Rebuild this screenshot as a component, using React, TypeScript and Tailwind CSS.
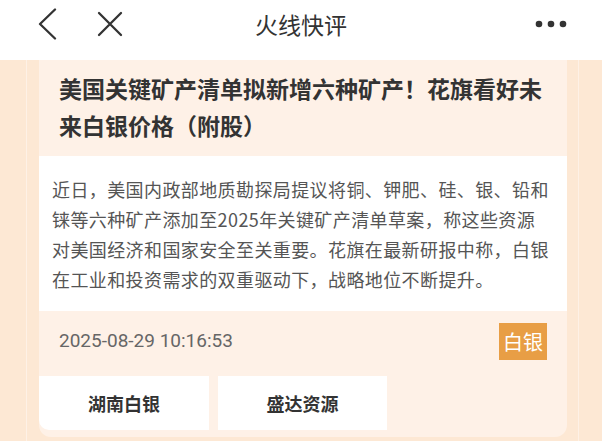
const cjk = "font-['Noto_Sans_CJK_SC','Noto_Sans',sans-serif]";

function BackIcon() {
  return (
    <svg width="20" height="32" viewBox="0 0 20 32" fill="none">
      <path d="M18 1.5 L3 16 L18 30.5" stroke="#333333" strokeWidth="2.3" strokeLinecap="round" strokeLinejoin="round" />
    </svg>
  );
}

function CloseIcon() {
  return (
    <svg width="26" height="26" viewBox="0 0 26 26" fill="none">
      <path d="M2 2 L24 24 M24 2 L2 24" stroke="#333333" strokeWidth="2.3" strokeLinecap="round" />
    </svg>
  );
}

function MoreIcon() {
  return (
    <svg width="34" height="10" viewBox="0 0 34 10" fill="#333333">
      <circle cx="5" cy="5" r="3.3" />
      <circle cx="17" cy="5" r="3.3" />
      <circle cx="29" cy="5" r="3.3" />
    </svg>
  );
}

function Header() {
  return (
    <div className="h-[60px] bg-white flex items-center justify-between pl-[37px] pr-[34px] relative shrink-0">
      <div className="flex items-center gap-[40px] pb-[12px]">
        <BackIcon />
        <CloseIcon />
      </div>
      <p className={`absolute left-1/2 -translate-x-1/2 top-[10px] text-[23px] leading-[28px] text-[#333] ${cjk}`}>火线快评</p>
      <div className="pb-[12px]">
        <MoreIcon />
      </div>
    </div>
  );
}

function StockButton({ name, className }: { name: string; className?: string }) {
  return (
    <div className={`h-[54px] bg-white flex items-center justify-center ${className ?? ""}`}>
      <span className={`text-[18px] font-bold text-[#333] ${cjk}`}>{name}</span>
    </div>
  );
}

function NewsCard() {
  return (
    <div className="bg-[#fef1e7] rounded-b-[12px] overflow-hidden pb-[7px]">
      <div className="px-[20px] pt-[10px] pb-[12px]">
        <h1 className={`text-[23px] leading-[37px] font-bold text-[#333] ${cjk}`}>
          美国关键矿产清单拟新增六种矿产！花旗看好未来白银价格（附股）
        </h1>
      </div>
      <div className="bg-white px-[13px] pt-[18px] pb-[17px]">
        <p className={`text-[18px] leading-[30px] tracking-[0.4px] text-[#555] ${cjk}`}>
          近日，美国内政部地质勘探局提议将铜、钾肥、硅、银、铅和铼等六种矿产添加至2025年关键矿产清单草案，称这些资源
          <br />
          对美国经济和国家安全至关重要。花旗在最新研报中称，白银
          <br />
          在工业和投资需求的双重驱动下，战略地位不断提升。
        </p>
      </div>
      <div className="flex items-center justify-between pl-[20px] pr-[20px] pt-[12px]">
        <span className="font-['Roboto',sans-serif] text-[19px] text-[#666]">2025-08-29 10:16:53</span>
        <span className={`h-[37px] w-[48px] bg-[#e89e45] text-white text-[20px] flex items-center justify-center ${cjk}`}>白银</span>
      </div>
      <div className="flex gap-[9px] mt-[16px]">
        <StockButton name="湖南白银" className="w-[170px] rounded-bl-[10px]" />
        <StockButton name="盛达资源" className="w-[169px]" />
      </div>
    </div>
  );
}

export default function App() {
  return (
    <div className="w-[602px] h-[441px] overflow-hidden flex flex-col bg-[#fde8d4]">
      <Header />
      <div className="flex-1 pl-[26px] pr-[23px]">
        <div className="h-full border-x border-[#fef1e6] pl-[12px] pr-[11px]">
          <NewsCard />
        </div>
      </div>
    </div>
  );
}
